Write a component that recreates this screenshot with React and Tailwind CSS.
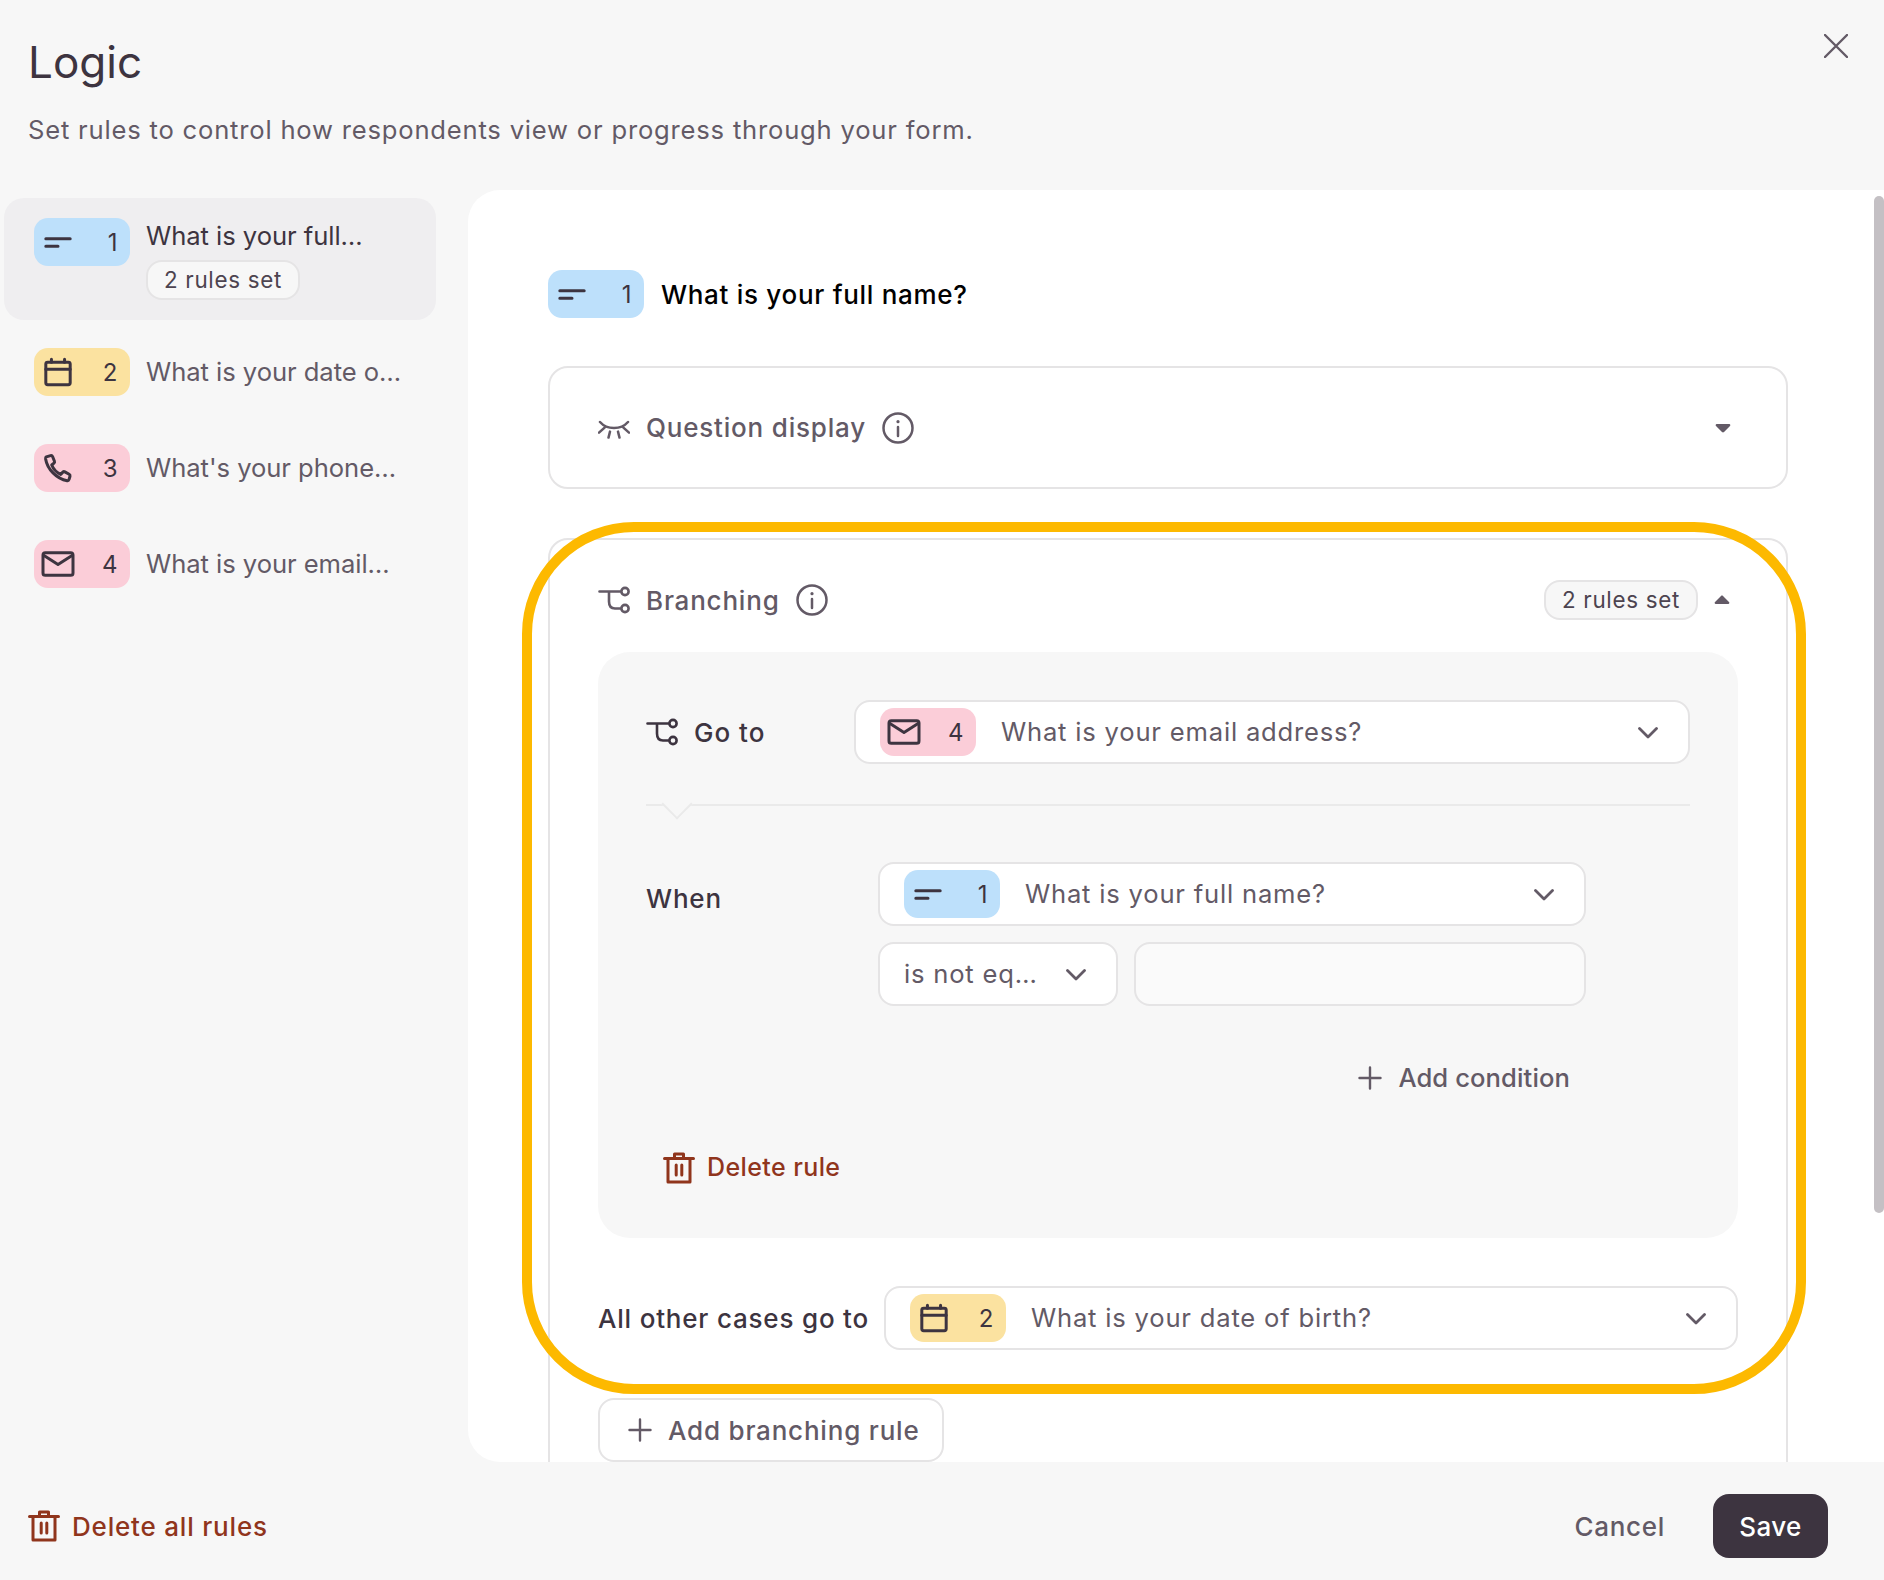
import React from 'react';

const questions = {
  1: { bg: 'bg-[#bde0fb]', icon: 'text' },
  2: { bg: 'bg-[#fbe2a0]', icon: 'date' },
  3: { bg: 'bg-[#fbcdd8]', icon: 'phone' },
  4: { bg: 'bg-[#fbcdd8]', icon: 'mail' },
};

const Icon = ({ name, className = '' }) => {
  const common = { fill: 'none', stroke: 'currentColor', strokeLinecap: 'round', strokeLinejoin: 'round', className };
  if (name === 'text') return (
    <svg viewBox="0 0 32 32" strokeWidth="3.2" {...common}><path d="M3 12.500h26M3 20.500h13" /></svg>
  );
  if (name === 'date') return (
    <svg viewBox="0 0 32 32" strokeWidth="3.200" {...common}><rect x="3" y="5.500" width="26" height="24" rx="2" /><path d="M3 13h26M9 2.500v3M23 2.500v3" /></svg>
  );
  if (name === 'phone') return (
    <svg viewBox="0 0 32 32" strokeWidth="3.200" {...common}><path d="M3.500 4.200 8 2.800c1-.3 1.800.1 2.200 1l2 5c.3.800.1 1.500-.5 2l-2.400 2c1.600 4 5.400 8 9.600 10l2.300-2.400c.6-.6 1.400-.7 2.100-.3l4.600 2.600c.8.500 1.100 1.200.9 2.100l-1 3.400c-.3 1-1 1.500-2 1.300C14.500 27.500 4.500 17 2.800 6.300c-.1-1 .1-1.800.7-2.100z" /></svg>
  );
  if (name === 'mail') return (
    <svg viewBox="0 0 32 32" strokeWidth="3.200" {...common} className={`${className} overflow-visible`}><rect x="0" y="4" width="32" height="24" rx="2.500" /><path d="m1 7 15 9.500L31 7" /></svg>
  );
  if (name === 'eye') return (
    <svg viewBox="0 0 32 32" strokeWidth="2.500" {...common}><path d="M2 10c7 8 21 8 28 0M1 20.700 6.600 15.600M31 20.700 25.400 15.600M12 19.600l-1.500 6M20 19.600l1.500 6" /></svg>
  );
  if (name === 'branch') return (
    <svg viewBox="0 0 32 32" strokeWidth="2.600" {...common}><path d="M1.500 7.500h21M11 7.500v10c0 4.500 2 7 6 7h5.500" /><circle cx="27" cy="7.500" r="3.600" /><circle cx="27" cy="24.500" r="3.600" /></svg>
  );
  if (name === 'info') return (
    <svg viewBox="0 0 32 32" strokeWidth="2.500" {...common}><circle cx="16" cy="16" r="14.500" /><path d="M16 15v9" /><path d="M16 9.500v.2" strokeWidth="3.200" /></svg>
  );
  if (name === 'trash') return (
    <svg viewBox="0 0 32 32" strokeWidth="3" {...common}><path d="M1.500 6.500h29M5 6.500V30h22V6.500M11.500 6.500V2h9v4.500M13.200 13v10M18.800 13v10" /></svg>
  );
  if (name === 'plus') return (
    <svg viewBox="0 0 24 24" strokeWidth="2.400" {...common}><path d="M12 1.500v21M1.500 12h21" /></svg>
  );
  if (name === 'chevron') return (
    <svg viewBox="0 0 20 12" strokeWidth="2.800" {...common}><path d="m1.500 1.500 8.500 8.500 8.500-8.500" /></svg>
  );
  if (name === 'close') return (
    <svg viewBox="0 0 24 24" strokeWidth="2.400" {...common}><path d="m1 1 22 22M23 1 1 23" /></svg>
  );
  return null;
};

const Caret = ({ up }) => (
  <svg viewBox="0 0 16 10" className="h-[10px] w-[16px] text-[#635a66]" fill="currentColor">
    {up ? <path d="M8 .5c.4 0 .7.100 1 .4l6 6.100c.7.700.3 2-.7 2H1.700c-1 0-1.400-1.300-.7-2L7 .9c.3-.3.600-.4 1-.4z" />
      : <path d="M8 9.500c-.4 0-.7-.100-1-.4L1 3C.3 2.300.7 1 1.700 1h12.600c1 0 1.400 1.300.7 2L9 9.100c-.3.300-.6.400-1 .4z" />}
  </svg>
);

const Badge = ({ n }) => {
  const q = questions[n];
  return (
    <div className={`flex h-[48px] w-[96px] shrink-0 items-center justify-between rounded-[14px] pl-[9px] pr-[12.5px] text-[#3d3440] ${q.bg}`}>
      <Icon name={q.icon} className="h-[30px] w-[30px]" />
      <span className="pt-[1px] text-[24px] leading-none">{n}</span>
    </div>
  );
};

const Pill = ({ className = '' }) => (
  <span className={`flex h-[40px] w-[154px] items-center justify-center rounded-[16px] border-2 border-[#e5e4e5] text-[22.4px] tracking-[0.7px] text-[#4d4450] ${className}`}>2 rules set</span>
);

const Select = ({ n, label, className = '' }) => (
  <div className={`flex h-[64px] items-center justify-between rounded-[16px] border-2 border-[#e5e4e5] bg-white pl-[24px] pr-[30px] ${className}`}>
    <div className="flex items-center gap-[25px]">
      <Badge n={n} />
      <span className="pt-[1px] text-[25.6px] tracking-[0.8px] text-[#635a66]">{label}</span>
    </div>
    <Icon name="chevron" className="mt-[2px] h-[12px] w-[20px] text-[#635a66]" />
  </div>
);

const SideItem = ({ n, label }) => (
  <div className="flex h-[48px] items-center gap-[16px] pl-[34px]">
    <Badge n={n} />
    <span className="pt-[1px] text-[25.6px] tracking-[-0.05px] text-[#635a66]">{label}</span>
  </div>
);

export default function App() {
  return (
    <div className="relative flex h-[1580px] w-[1884px] flex-col overflow-hidden bg-[#f7f7f7] font-['Inter',sans-serif]">
      <button className="absolute left-[1824px] top-[34px] text-[#635a66]">
        <Icon name="close" className="h-[24px] w-[24px]" />
      </button>

      {/* Encabezado */}
      <div className="h-[190px] shrink-0 pl-[28px] pt-[35px]">
        <h1 className="text-[44px] leading-[54px] text-[#3d3440]">Logic</h1>
        <p className="mt-[23px] text-[25.6px] leading-[36px] tracking-[0.8px] text-[#635a66]">Set rules to control how respondents view or progress through your form.</p>
      </div>

      <div className="flex h-[1272px] shrink-0">
        {/* Lista de preguntas */}
        <div className="w-[468px] shrink-0 pt-[8px]">
          <div className="ml-[4px] flex h-[122px] w-[432px] gap-[16px] rounded-[20px] bg-[#efeef0] pl-[30px] pt-[20px]">
            <Badge n={1} />
            <div className="flex flex-col items-start">
              <span className="text-[25.6px] leading-[36px] tracking-[-0.05px] text-[#3d3440]">What is your full…</span>
              <Pill className="mt-[6px] bg-[#f7f7f7]" />
            </div>
          </div>
          <div className="mt-[28px] flex flex-col gap-[48px]">
            <SideItem n={2} label="What is your date o…" />
            <SideItem n={3} label="What's your phone…" />
            <SideItem n={4} label="What is your email…" />
          </div>
        </div>

        {/* Panel */}
        <div className="relative grow overflow-hidden rounded-l-[32px] bg-white pl-[80px] pt-[80px]">
          <div className="absolute right-0 top-[6px] h-[1017px] w-[10px] rounded-full bg-[#c4c0c4]" />
          <div className="flex items-center gap-[17px]">
            <Badge n={1} />
            <span className="text-[26px] font-medium tracking-[0.7px] text-black">What is your full name?</span>
          </div>

          <div className="mt-[48px] flex h-[123px] w-[1240px] items-center justify-between rounded-[20px] border-2 border-[#e5e4e5] pl-[48px] pr-[55px] text-[#635a66]">
            <div className="flex items-center">
              <Icon name="eye" className="h-[32px] w-[32px]" />
              <span className="ml-[16px] text-[26px] font-[450] tracking-[0.8px]">Question display</span>
              <Icon name="info" className="ml-[16px] h-[32px] w-[32px]" />
            </div>
            <Caret />
          </div>

          <div className="mt-[49px] w-[1240px] rounded-t-[20px] border-2 border-[#e5e4e5] px-[48px] pb-[40px] pt-[40px]">
            <div className="flex h-[40px] items-center justify-between text-[#635a66]">
              <div className="flex items-center">
                <Icon name="branch" className="h-[32px] w-[32px]" />
                <span className="ml-[16px] text-[26px] font-[450] tracking-[0.8px]">Branching</span>
                <Icon name="info" className="ml-[16px] h-[32px] w-[32px]" />
              </div>
              <div className="flex items-center gap-[16px] pr-[8px]">
                <Pill className="bg-[#f7f7f7]" />
                <Caret up />
              </div>
            </div>

            <div className="mt-[32px] h-[586px] rounded-[32px] bg-[#f7f7f7] px-[48px] pt-[48px]">
              <div className="flex items-center">
                <div className="flex w-[208px] items-center text-[#3d3440]">
                  <Icon name="branch" className="h-[32px] w-[32px]" />
                  <span className="ml-[16px] text-[26px] font-[450] tracking-[1px]">Go to</span>
                </div>
                <Select n={4} label="What is your email address?" className="grow" />
              </div>

              <div className="relative mt-[40px] h-[2px] bg-[#eaeaea]">
                <div className="absolute left-[20px] top-[-11px] h-[22px] w-[22px] rotate-45 border-b-2 border-r-2 border-[#eaeaea] bg-[#f7f7f7]" />
              </div>

              <div className="mt-[56px] flex">
                <span className="mt-[17px] w-[232px] text-[26px] font-[450] tracking-[0.8px] text-[#3d3440]">When</span>
                <div className="w-[708px]">
                  <Select n={1} label="What is your full name?" />
                  <div className="mt-[16px] flex gap-[16px]">
                    <div className="flex h-[64px] w-[240px] items-center justify-between rounded-[16px] border-2 border-[#e5e4e5] bg-white pl-[24px] pr-[30px] text-[#635a66]">
                      <span className="pt-[1px] text-[25.6px] tracking-[0.8px]">is not eq…</span>
                      <Icon name="chevron" className="mt-[2px] h-[12px] w-[20px]" />
                    </div>
                    <div className="h-[64px] grow rounded-[16px] border-2 border-[#e5e4e5] bg-[#fafafa]" />
                  </div>
                  <div className="mt-[52px] flex items-center justify-end gap-[16px] pr-[16px] text-[#635a66]">
                    <Icon name="plus" className="h-[24px] w-[24px]" />
                    <span className="pt-[1px] text-[25.6px] font-[450] tracking-[0.1px]">Add condition</span>
                  </div>
                </div>
              </div>

              <div className="ml-[17px] mt-[52px] flex items-center gap-[12px] text-[#90351c]">
                <Icon name="trash" className="h-[32px] w-[32px]" />
                <span className="text-[25px] font-medium tracking-[0.4px]">Delete rule</span>
              </div>
            </div>

            <div className="mt-[48px] flex items-center justify-between">
              <span className="text-[26px] font-[450] tracking-[0.8px] text-[#3d3440]">All other cases go to</span>
              <Select n={2} label="What is your date of birth?" className="w-[854px]" />
            </div>

            <div className="mt-[48px] flex h-[64px] w-[346px] items-center gap-[16px] rounded-[16px] border-2 border-[#e5e4e5] pl-[28px] text-[#635a66]">
              <Icon name="plus" className="h-[24px] w-[24px]" />
              <span className="text-[26px] font-[450] tracking-[0.8px]">Add branching rule</span>
            </div>
          </div>
        </div>
      </div>

      {/* Pie */}
      <div className="flex grow items-center justify-between pl-[28px] pr-[56px] pt-[10px]">
        <div className="flex items-center gap-[12px] text-[#90351c]">
          <Icon name="trash" className="h-[32px] w-[32px]" />
          <span className="text-[26px] font-medium tracking-[0.8px]">Delete all rules</span>
        </div>
        <div className="flex items-center gap-[48px]">
          <span className="text-[26px] font-[450] tracking-[0.7px] text-[#635a66]">Cancel</span>
          <button className="flex h-[64px] w-[115px] items-center justify-center rounded-[16px] bg-[#3d3440] text-[26px] font-medium tracking-[0.4px] text-white">Save</button>
        </div>
      </div>

      {/* Marca de resaltado */}
      <div className="pointer-events-none absolute left-[522px] top-[522px] h-[872px] w-[1284px] rounded-[112px] border-[10px] border-[#fdb900]" />
    </div>
  );
}
